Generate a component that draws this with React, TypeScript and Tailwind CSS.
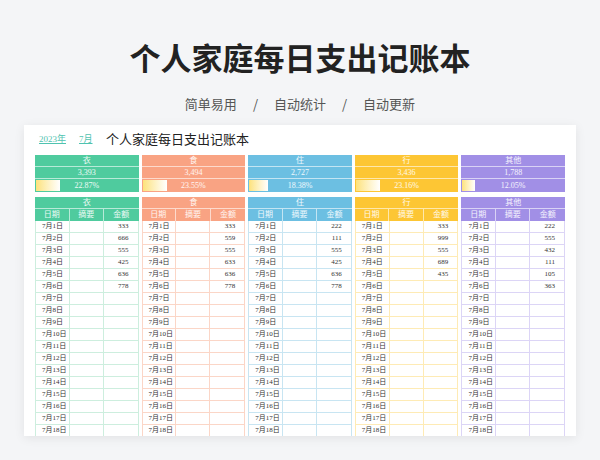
const cats = [
  { name: "衣", total: "3,393", pct: "22.87%", p: 22.87, c: "#4fcb9e", line: "#cdeede", vals: ["333", "666", "555", "425", "636", "778"] },
  { name: "食", total: "3,494", pct: "23.55%", p: 23.55, c: "#f9a383", line: "#fbd6c7", vals: ["333", "559", "555", "633", "636", "778"] },
  { name: "住", total: "2,727", pct: "18.38%", p: 18.38, c: "#6cbfe2", line: "#c8e5f2", vals: ["222", "111", "555", "425", "636", "778"] },
  { name: "行", total: "3,436", pct: "23.16%", p: 23.16, c: "#fdc634", line: "#feebb5", vals: ["333", "999", "555", "689", "435", ""] },
  { name: "其他", total: "1,788", pct: "12.05%", p: 12.05, c: "#a18fe6", line: "#dcd5f6", vals: ["222", "555", "432", "111", "105", "363"] },
];
const serif = { fontFamily: '"Liberation Serif","Noto Sans CJK SC",serif' };
export default function App() {
  return (
    <div className="w-[600px] h-[460px] bg-[#f4f5f7] overflow-hidden" style={{ fontFamily: '"Noto Sans CJK SC",sans-serif' }}>
      <div className="h-[86px] flex items-end justify-center text-[31px] font-bold text-[#222] leading-none pb-[14px]">个人家庭每日支出记账本</div>
      <div className="flex justify-center gap-[16px] text-[13px] text-[#555] h-[36px] items-center">
        <span>简单易用</span><span>/</span><span>自动统计</span><span>/</span><span>自动更新</span>
      </div>
      <div className="mx-[24px] mt-[3px] h-[311px] bg-white shadow-[0_2px_10px_rgba(0,0,0,0.08)] overflow-hidden px-[11px]" style={serif}>
        <div className="flex items-center h-[30px] text-[13px] text-[#222]">
          <span className="text-[9px] text-[#4fc3b0] underline ml-[4px] w-[40px]">2023年</span>
          <span className="text-[9px] text-[#4fc3b0] underline w-[27px]">7月</span>
          <span>个人家庭每日支出记账本</span>
        </div>
        <div className="flex gap-[3px]">
          {cats.map((c) => (
            <div key={c.name} className="w-[104px] flex flex-col">
              <div className="text-white/90 text-[8px] text-center" style={{ background: c.c }}>
                <div className="h-[12px] leading-[12px] border-b border-white/60">{c.name}</div>
                <div className="h-[12px] leading-[12px] border-b border-white/60">{c.total}</div>
                <div className="h-[13px] leading-[13px] relative">
                  <div className="absolute left-[1px] top-[1px] bottom-[1px] bg-gradient-to-r from-[#fde27a] to-white" style={{ width: `${c.p}%` }} />
                  <span className="relative">{c.pct}</span>
                </div>
              </div>
              <div className="mt-[5px] text-white/90 text-[8px] text-center" style={{ background: c.c }}>
                <div className="h-[12px] leading-[12px] border-b border-white/60">{c.name}</div>
                <div className="grid grid-cols-3 h-[12px] leading-[12px]">
                  <span className="border-r border-white/60">日期</span><span className="border-r border-white/60">摘要</span><span>金额</span>
                </div>
              </div>
              {Array.from({ length: 18 }).map((_, i) => (
                <div key={i} className="grid grid-cols-3 h-[12px] leading-[11px] text-[7px] text-[#333] border-b border-x" style={{ borderColor: c.line }}>
                  <span className="pl-[6px] border-r" style={{ borderColor: c.line }}>7月{i + 1}日</span>
                  <span className="border-r" style={{ borderColor: c.line }}></span>
                  <span className="text-right pr-[9px]">{c.vals[i] ?? ""}</span>
                </div>
              ))}
            </div>
          ))}
        </div>
      </div>
    </div>
  );
}
